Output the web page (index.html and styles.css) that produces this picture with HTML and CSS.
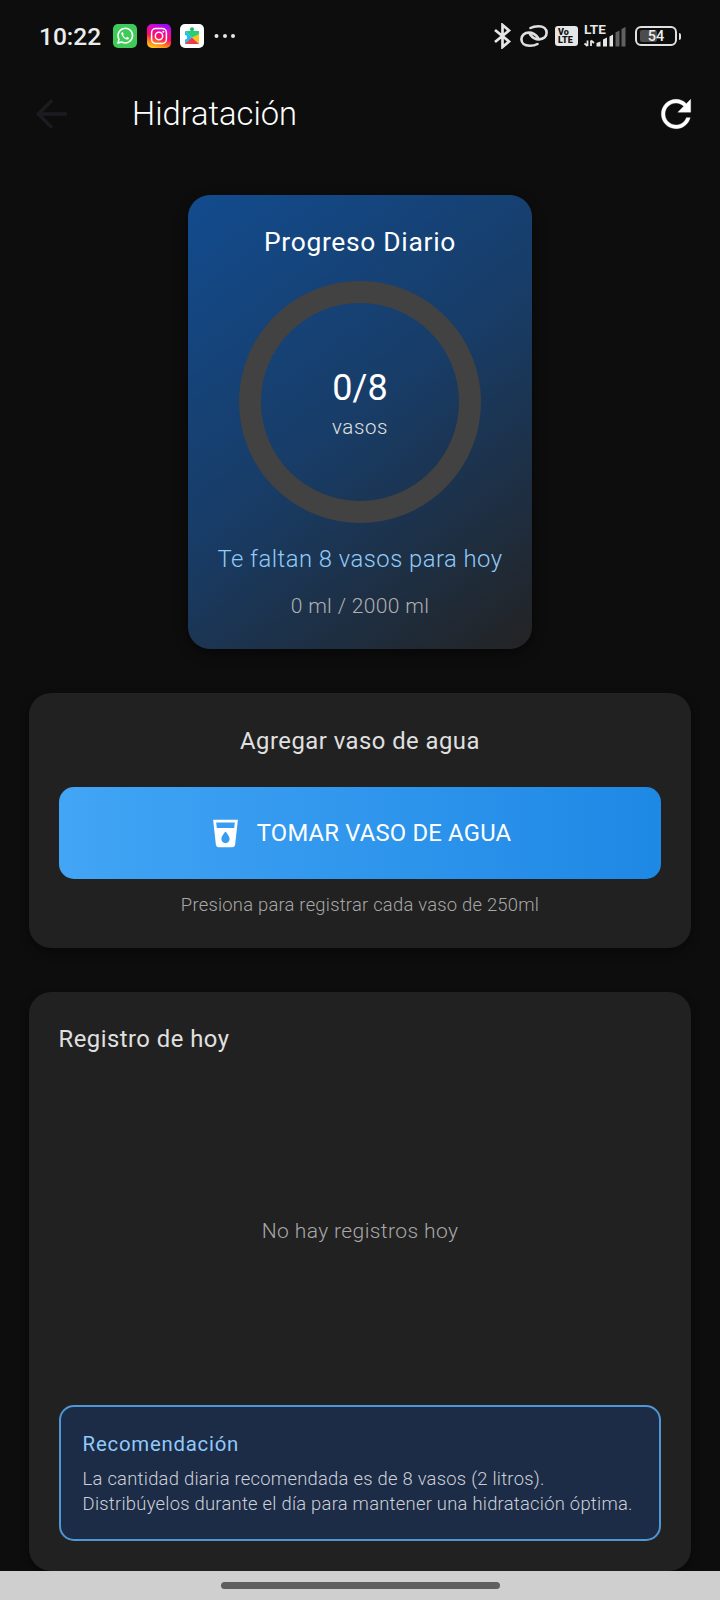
FILE: index.html
```html
<!DOCTYPE html>
<html lang="es">
<head>
<meta charset="utf-8">
<title>Hidratación</title>
<link rel="stylesheet" href="styles.css">
</head>
<body>
<div class="screen">
  <header class="status">
    <div class="status-left">
      <span class="clock">10:22</span>
      <svg class="app-icon" viewBox="0 0 24 24"><rect width="24" height="24" rx="5" fill="#3fcb58"/><path d="M5 19l1-3.700A7.300 7.300 0 1 1 8.800 18z" fill="none" stroke="#fff" stroke-width="1.500" stroke-linejoin="round"/><path d="M9.300 8c-1.200.4-1.300 1.800-.4 3.400 1 1.900 2.600 3.300 4.400 4 1.300.5 2.600-.2 2.800-1.500l-2-1.100-1 1.100c-1.400-.6-2.400-1.600-3-3l.8-.9z" fill="#fff"/></svg>
      <svg class="app-icon" viewBox="0 0 24 24"><defs><linearGradient id="ig" x1="0.2" y1="1" x2="0.5" y2="0"><stop offset="0" stop-color="#ffd21e"/><stop offset=".25" stop-color="#ff7a1c"/><stop offset=".5" stop-color="#fb0b66"/><stop offset=".8" stop-color="#e00bc0"/><stop offset="1" stop-color="#a10af5"/></linearGradient></defs><rect width="24" height="24" rx="5" fill="url(#ig)"/><rect x="4.600" y="4.600" width="14.800" height="14.800" rx="4.200" fill="none" stroke="#fff" stroke-width="1.500"/><circle cx="12" cy="12" r="3.700" fill="none" stroke="#fff" stroke-width="1.500"/><circle cx="16.300" cy="7.700" r="1" fill="#fff"/></svg>
      <svg class="app-icon" viewBox="0 0 24 24"><rect width="24" height="24" rx="5" fill="#fff"/><circle cx="12" cy="5.300" r="2" fill="#1fb86a"/><path d="M5 7h14v6.500h-7z" fill="#22cf7a"/><path d="M5 7l7 6.500L5.500 20H5v-4.500a2.200 2.200 0 0 0 0-4.400z" fill="#27b9ee"/><path d="M19 10v10l-7-6.500z" fill="#fcc419"/><path d="M5 20l7-6.500 7 6.500z" fill="#ee3b48"/></svg>
      <svg class="dots" viewBox="0 0 22 6"><circle cx="2.500" cy="3" r="2" /><circle cx="11" cy="3" r="2"/><circle cx="19" cy="3" r="2"/></svg>
    </div>
    <div class="status-right">
      <svg class="bt" viewBox="0 0 18 26"><path d="M1 7L15 18.500L8.500 24V2L15 7.500L1 19" fill="none" stroke="#e6e6e6" stroke-width="2.700"/></svg>
      <svg class="link" viewBox="0 0 28 22"><g fill="none" stroke="#e0e0e0" stroke-width="2.600" stroke-linecap="round"><path d="M17.500 19C15.500 20.200 13 20.700 9.500 20.700C4.500 20.700 1.400 18 1.400 14.200C1.400 10.200 4.500 7.600 9 7.600C13.500 7.600 15.500 9.200 18 12.800"/><path d="M10.500 3C12.500 1.800 15 1.300 18.500 1.300C23.500 1.300 26.600 4 26.600 7.800C26.600 11.800 23.500 14.400 19 14.400C14.500 14.400 12.500 12.800 10 9.200"/></g></svg>
      <div class="volte"><span>Vo</span><span>LTE</span></div>
      <div class="signal"><span>LTE</span>
        <svg viewBox="0 0 42 20"><path d="M3.500 13.500V19M3.500 19L.5 16.500M7 19V13.500M7 13.500L10 16" stroke="#e6e6e6" stroke-width="1.800" fill="none"/><g fill="#e6e6e6"><path d="M12.500 16l4-1.500V19.500h-4z"/><path d="M19 12.500l4-2v9h-4z"/><path d="M25.500 9.500l3.500-2v12h-3.500z"/></g><g fill="#606060"><path d="M31.500 5.500l4-2v16h-4z"/><path d="M37.500 2l4-2v19.500h-4z"/></g></svg>
      </div>
      <div class="battery"><div class="cell"><i></i><span>54</span></div><b></b></div>
    </div>
  </header>

  <div class="appbar">
    <svg class="icon44" viewBox="0 0 24 24"><path d="M19.500 12H4.300M11.500 4.500L4 12L11.500 19.500" fill="none" stroke="#1c1b20" stroke-width="1.900"/></svg>
    <h1>Hidratación</h1>
    <svg class="icon44" viewBox="0 0 24 24"><path fill="#fff" stroke="#fff" stroke-width=".2" d="M17.650 6.350C16.200 4.900 14.210 4 12 4c-4.420 0-7.990 3.580-7.990 8s3.570 8 7.990 8c3.730 0 6.840-2.550 7.730-6h-2.080c-.82 2.330-3.040 4-5.650 4-3.310 0-6-2.690-6-6s2.690-6 6-6c1.660 0 3.140.69 4.220 1.780L13 11h7V4l-2.350 2.350z"/></svg>
  </div>

  <main class="content">
    <section class="progress-card">
      <h2>Progreso Diario</h2>
      <div class="ring"><strong>0/8</strong><span>vasos</span></div>
      <p class="remaining">Te faltan 8 vasos para hoy</p>
      <p class="volume">0 ml / 2000 ml</p>
    </section>

    <section class="card add">
      <h2>Agregar vaso de agua</h2>
      <button class="drink"><svg viewBox="0 0 24 24"><path fill="#fff" d="M3 2l2.010 18.230C5.130 21.230 5.970 22 7 22h10c1.030 0 1.870-.77 1.990-1.770L21 2H3zm9 17c-1.660 0-3-1.340-3-3 0-2 3-5.400 3-5.400s3 3.400 3 5.400c0 1.660-1.340 3-3 3zm6.330-11H5.670l-.44-4h13.530l-.43 4z"/></svg><span>TOMAR VASO DE AGUA</span></button>
      <p class="hint">Presiona para registrar cada vaso de 250ml</p>
    </section>

    <section class="card log">
      <h2>Registro de hoy</h2>
      <div class="empty"><span>No hay registros hoy</span></div>
      <div class="tip">
        <h3>Recomendación</h3>
        <p>La cantidad diaria recomendada es de 8 vasos (2 litros).<br>Distribúyelos durante el día para mantener una hidratación óptima.</p>
      </div>
    </section>
  </main>

  <footer class="navbar"><div class="handle"></div></footer>
</div>
</body>
</html>
```
FILE: styles.css
```css
* { box-sizing: border-box; margin: 0; padding: 0; }
body { background: #0d0d0d; font-family: Roboto, "Liberation Sans", sans-serif; }
.screen { width: 720px; height: 1600px; display: flex; flex-direction: column; overflow: hidden; background: #0d0d0d; }
svg { display: block; flex: none; }

.status { height: 72px; flex: none; display: flex; justify-content: space-between; align-items: center; padding: 0 39px; }
.status-left, .status-right { display: flex; align-items: center; }
.clock { color: #ececec; font-size: 24.500px; font-weight: 500; line-height: 28px; width: 64px; margin-right: 10px; padding-top: 1px; white-space: nowrap; }
.app-icon { width: 24px; height: 24px; margin-right: 9.500px; }
.dots { width: 22px; height: 6px; fill: #e6e6e6; }
.bt { width: 18px; height: 26px; margin-right: 8px; }
.link { width: 28px; height: 22px; margin-right: 7px; }
.volte { width: 23px; height: 20px; border-radius: 3px; background: #e6e6e6; color: #111; font-size: 9px; font-weight: 900; line-height: 8px; padding: 2px 0 0 3px; margin-right: 6px; display: flex; flex-direction: column; }
.signal { width: 42px; height: 22px; margin-right: 9px; position: relative; }
.signal span { position: absolute; left: 0; top: 0; color: #e6e6e6; font-size: 13.500px; font-weight: 700; line-height: 9px; }
.signal svg { width: 42px; height: 20px; margin-top: 2px; }
.battery { display: flex; align-items: center; gap: 2px; }
.battery .cell { width: 42px; height: 20px; border: 2px solid #e0e0e0; border-radius: 6px; position: relative; display: flex; justify-content: center; align-items: center; }
.battery i { position: absolute; left: 3px; top: 2px; width: 17px; height: 12px; background: #4c4c4c; border-radius: 2px; }
.battery span { position: relative; color: #eee; font-size: 14.500px; font-weight: 500; line-height: 16px; padding-top: 1px; }
.battery b { width: 2px; height: 7px; background: #e0e0e0; border-radius: 0 2px 2px 0; }

.appbar { height: 84px; flex: none; display: flex; align-items: center; padding: 0 22px 0 30.500px; }
.icon44 { width: 44px; height: 44px; }
.appbar h1 { flex: 1; margin-left: 57.500px; color: #fff; font-size: 32.700px; font-weight: 300; line-height: 40px; }

.content { flex: 1; min-height: 0; overflow: hidden; padding: 38.500px 29.300px 0; display: flex; flex-direction: column; align-items: center; }
.progress-card { flex: none; width: 344px; height: 454px; padding-top: 30px; border-radius: 22px; background: linear-gradient(142.800deg, #124b8e, #183c66 50%, #232323); box-shadow: 0 4px 12px rgba(0,0,0,.5); display: flex; flex-direction: column; align-items: center; text-align: center; }
.progress-card h2 { color: #fff; font-size: 26.400px; font-weight: 400; line-height: 34px; letter-spacing: .7px; }
.ring { margin-top: 22.500px; width: 242px; height: 242px; flex: none; border: 22px solid #424242; border-radius: 50%; display: flex; flex-direction: column; align-items: center; padding-top: 63px; }
.ring strong { color: #fff; font-size: 36px; font-weight: 400; line-height: 44px; letter-spacing: .1px; }
.ring span { color: #e0e0e0; font-size: 20.500px; font-weight: 300; line-height: 28px; letter-spacing: .65px; margin-top: 3px; }
.remaining { margin-top: 19.500px; color: #90caf9; font-size: 23.800px; font-weight: 300; line-height: 32px; letter-spacing: .49px; white-space: nowrap; }
.volume { margin-top: 17px; color: #b0b0b0; font-size: 21px; font-weight: 300; line-height: 28px; letter-spacing: .35px; }

.card { flex: none; width: 100%; margin-top: 44.500px; border-radius: 22px; background: #212121; box-shadow: 0 4px 10px rgba(0,0,0,.4); padding: 31px 29.300px 29.300px; display: flex; flex-direction: column; }
.card h2 { color: #e0e0e0; font-size: 23.800px; font-weight: 400; line-height: 34px; letter-spacing: .49px; }
.add { height: 254.500px; align-items: center; }
.drink { margin-top: 29.300px; width: 100%; height: 91.500px; flex: none; border: 0; border-radius: 15px; background: linear-gradient(90deg, #42a5f5, #1e88e5); color: #fff; font: 400 23.800px/34px Roboto, sans-serif; letter-spacing: .2px; display: flex; align-items: center; justify-content: center; gap: 15px; white-space: nowrap; }
.drink svg { width: 33px; height: 33px; }
.hint { margin-top: 14.500px; color: #a8a8a8; font-size: 18.400px; font-weight: 300; line-height: 24px; letter-spacing: .23px; white-space: nowrap; }
.log { height: 578.500px; padding-top: 30.300px; }
.empty { flex: 1; display: flex; align-items: center; justify-content: center; color: #a8a8a8; font-size: 21px; font-weight: 300; line-height: 28px; letter-spacing: .4px; padding-top: 1px; }
.tip { flex: none; height: 136px; border: 2px solid #4f96d6; border-radius: 15px; background: #1c2b46; padding: 23px 0 0 22px; }
.tip h3 { color: #90caf9; font-size: 20.400px; font-weight: 400; line-height: 28px; letter-spacing: .75px; }
.tip p { margin-top: 7.500px; color: #ccd0d8; font-size: 18.400px; font-weight: 300; line-height: 25.300px; letter-spacing: .25px; white-space: nowrap; }

.navbar { height: 29.500px; flex: none; background: #cfcfcf; display: flex; justify-content: center; padding-top: 11.500px; }
.handle { width: 279px; height: 7px; border-radius: 4px; background: #5e5e5e; }
```
